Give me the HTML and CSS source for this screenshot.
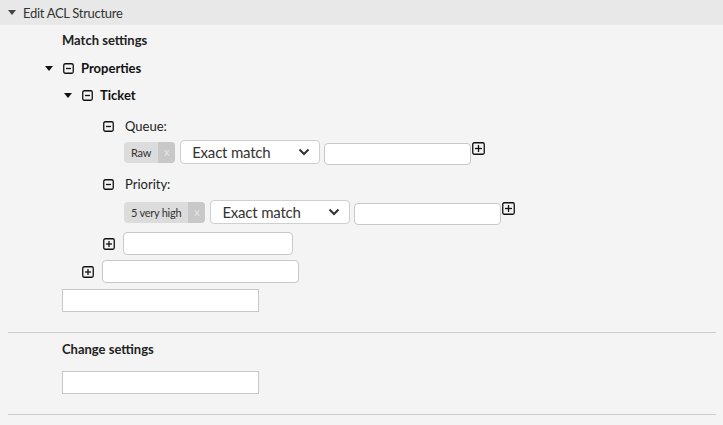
FILE: index.html
```html
<!DOCTYPE html>
<html>
<head>
<meta charset="utf-8">
<link rel="stylesheet" href="styles.css">
</head>
<body>
<div class="header">
  <span class="caret hcaret"></span>
  <span class="htitle">Edit ACL Structure</span>
</div>
<div class="content">
  <div class="title r-match">Match settings</div>

  <div class="node r-props lvl0">
    <span class="caret"></span>
    <svg class="box" width="11" height="11" viewBox="0 0 11 11"><rect x="0.75" y="0.75" width="9.5" height="9.5" rx="1.5" fill="none" stroke="#111" stroke-width="1.3"/><line x1="3" y1="5.5" x2="8" y2="5.5" stroke="#111" stroke-width="1.3"/></svg>
    <span class="nlabel">Properties</span>
  </div>

  <div class="node r-ticket lvl1">
    <span class="caret"></span>
    <svg class="box" width="11" height="11" viewBox="0 0 11 11"><rect x="0.75" y="0.75" width="9.5" height="9.5" rx="1.5" fill="none" stroke="#111" stroke-width="1.3"/><line x1="3" y1="5.5" x2="8" y2="5.5" stroke="#111" stroke-width="1.3"/></svg>
    <span class="nlabel">Ticket</span>
  </div>

  <div class="leaf r-queue lvl2">
    <svg class="box" width="11" height="11" viewBox="0 0 11 11"><rect x="0.75" y="0.75" width="9.5" height="9.5" rx="1.5" fill="none" stroke="#111" stroke-width="1.3"/><line x1="3" y1="5.5" x2="8" y2="5.5" stroke="#111" stroke-width="1.3"/></svg>
    <span class="llabel">Queue:</span>
  </div>
  <div class="editrow r-edit1">
    <span class="tag"><span class="tagtext">Raw</span><span class="tagx">x</span></span>
    <span class="select">Exact match<svg class="chev" width="12" height="8" viewBox="0 0 12 8"><path d="M1.5 1.5 L6 6 L10.5 1.5" fill="none" stroke="#333" stroke-width="2"/></svg></span>
    <span class="input"></span>
    <svg class="plus" width="13" height="13" viewBox="0 0 13 13"><rect x="0.75" y="0.75" width="11.5" height="11.5" rx="1.5" fill="none" stroke="#111" stroke-width="1.3"/><line x1="3" y1="6.5" x2="10" y2="6.5" stroke="#111" stroke-width="1.3"/><line x1="6.5" y1="3" x2="6.5" y2="10" stroke="#111" stroke-width="1.3"/></svg>
  </div>

  <div class="leaf r-prio lvl2">
    <svg class="box" width="11" height="11" viewBox="0 0 11 11"><rect x="0.75" y="0.75" width="9.5" height="9.5" rx="1.5" fill="none" stroke="#111" stroke-width="1.3"/><line x1="3" y1="5.5" x2="8" y2="5.5" stroke="#111" stroke-width="1.3"/></svg>
    <span class="llabel">Priority:</span>
  </div>
  <div class="editrow r-edit2">
    <span class="tag"><span class="tagtext">5 very high</span><span class="tagx">x</span></span>
    <span class="select">Exact match<svg class="chev" width="12" height="8" viewBox="0 0 12 8"><path d="M1.5 1.5 L6 6 L10.5 1.5" fill="none" stroke="#333" stroke-width="2"/></svg></span>
    <span class="input"></span>
    <svg class="plus" width="13" height="13" viewBox="0 0 13 13"><rect x="0.75" y="0.75" width="11.5" height="11.5" rx="1.5" fill="none" stroke="#111" stroke-width="1.3"/><line x1="3" y1="6.5" x2="10" y2="6.5" stroke="#111" stroke-width="1.3"/><line x1="6.5" y1="3" x2="6.5" y2="10" stroke="#111" stroke-width="1.3"/></svg>
  </div>

  <div class="addrow r-add1">
    <svg class="plus" width="12" height="12" viewBox="0 0 12 12"><rect x="0.75" y="0.75" width="10.5" height="10.5" rx="1.5" fill="none" stroke="#111" stroke-width="1.3"/><line x1="3" y1="6" x2="9" y2="6" stroke="#111" stroke-width="1.3"/><line x1="6" y1="3" x2="6" y2="9" stroke="#111" stroke-width="1.3"/></svg>
    <span class="input w170"></span>
  </div>
  <div class="addrow r-add2">
    <svg class="plus" width="12" height="12" viewBox="0 0 12 12"><rect x="0.75" y="0.75" width="10.5" height="10.5" rx="1.5" fill="none" stroke="#111" stroke-width="1.3"/><line x1="3" y1="6" x2="9" y2="6" stroke="#111" stroke-width="1.3"/><line x1="6" y1="3" x2="6" y2="9" stroke="#111" stroke-width="1.3"/></svg>
    <span class="input w197"></span>
  </div>
  <div class="sqrow r-add3"><span class="sqinput"></span></div>

  <hr class="sep r-hr1">
  <div class="title r-change">Change settings</div>
  <div class="sqrow r-add4"><span class="sqinput"></span></div>
  <hr class="sep r-hr2">
</div>
</body>
</html>
```

FILE: styles.css
```css
* { box-sizing: border-box; }
html, body { margin: 0; padding: 0; }
body {
  background: #f4f4f4;
  font-family: "Lato", "Open Sans", sans-serif;
  color: #333;
  width: 723px;
  height: 425px;
  overflow: hidden;
}
.header {
  height: 25px;
  background: #e8e8e8;
  display: flex;
  align-items: center;
  padding-left: 8px;
}
.caret {
  display: inline-block;
  width: 0; height: 0;
  border-left: 4px solid transparent;
  border-right: 4px solid transparent;
  border-top: 5px solid #111;
}
.hcaret { border-top-color: #444; margin-right: 7px; }
.htitle { font-size: 13px; color: #333; letter-spacing: -0.3px; }

.content { display: flex; flex-direction: column; }
.title {
  font-weight: bold;
  font-size: 13px;
  line-height: 20px;
  height: 20px;
  margin-left: 62px;
  color: #222;
}
.node, .leaf {
  display: flex;
  align-items: center;
  height: 20px;
}
.node .caret { margin-right: 10px; }
.node .box { margin-right: 7px; }
.leaf .box { margin-right: 11px; }
.nlabel { font-weight: bold; font-size: 13px; color: #111; }
.llabel { font-size: 13px; color: #222; }
.lvl0 { margin-left: 45px; }
.lvl1 { margin-left: 64px; }
.lvl2 { margin-left: 103px; }

.r-match { margin-top: 5px; }
.r-props { margin-top: 8px; }
.r-ticket { margin-top: 7px; }
.r-queue { margin-top: 11px; }
.r-edit1 { margin-top: 4px; }
.r-prio { margin-top: 10px; }
.r-edit2 { margin-top: 6px; }
.r-add1 { margin-top: 8px; margin-left: 103px; }
.r-add2 { margin-top: 5px; margin-left: 82px; }
.r-add3 { margin-top: 6px; }
.r-hr1 { margin-top: 20px; }
.r-change { margin-top: 6px; }
.r-add4 { margin-top: 12px; }
.r-hr2 { margin-top: 20px; }

.editrow {
  display: flex;
  align-items: flex-start;
  margin-left: 124px;
  height: 24px;
}
.tag {
  display: flex;
  height: 21px;
  margin-top: 2px;
  border-radius: 4px;
  overflow: hidden;
  font-size: 11px;
  background: #dcdcdc;
  color: #333;
}
.tagtext { padding: 0 7px 0 7px; line-height: 21px; letter-spacing: -0.25px; }
.tagx {
  width: 17px;
  background: #c8c8c8;
  color: #e6e6e6;
  text-align: center;
  line-height: 20px;
  font-size: 11px;
}
.select {
  display: flex;
  align-items: center;
  justify-content: space-between;
  width: 140px;
  height: 24px;
  margin-left: 5px;
  padding: 0 9px 0 11px;
  background: #fff;
  border: 1px solid #cfcfcf;
  border-radius: 4px;
  font-size: 15px;
  color: #333;
  letter-spacing: -0.2px;
}
.chev { display: block; }
.input {
  display: block;
  width: 147px;
  height: 22px;
  margin-top: 3px;
  margin-left: 4px;
  background: #fff;
  border: 1px solid #c8c8c8;
  border-radius: 4px;
}
.editrow .plus { margin-top: 2px; margin-left: 1px; }
.addrow { display: flex; align-items: center; height: 23px; }
.addrow .plus { margin-right: 8px; }
.addrow .input { margin: 0; height: 23px; }
.w170 { width: 170px !important; }
.w197 { width: 197px !important; }
.sqrow { margin-left: 62px; height: 23px; }
.sqinput {
  display: block;
  width: 197px;
  height: 23px;
  background: #fff;
  border: 1px solid #c8c8c8;
}
.sep {
  border: none;
  border-top: 1px solid #cccccc;
  height: 0;
  margin-bottom: 0;
  margin-left: 8px;
  margin-right: 7px;
}
```
